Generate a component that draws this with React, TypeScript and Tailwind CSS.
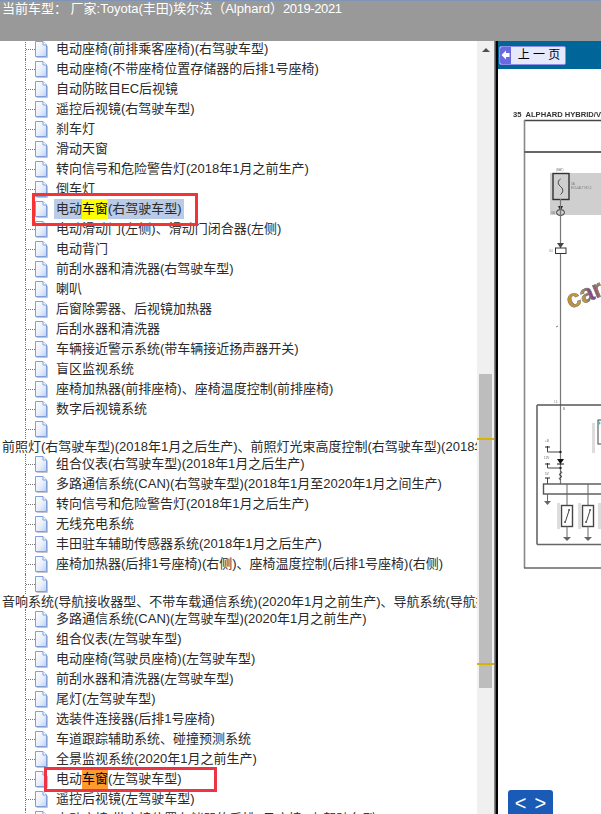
import React from "react";

const font = { fontFamily: '"Liberation Sans", "Noto Sans CJK SC", sans-serif' };

function DocIcon() {
  return (
    <svg width="13" height="17" viewBox="0 0 13 17" className="shrink-0">
      <defs>
        <linearGradient id="docg" x1="0" y1="0" x2="1" y2="1">
          <stop offset="0" stopColor="#ffffff" />
          <stop offset="0.55" stopColor="#e8eefb" />
          <stop offset="1" stopColor="#bcd0f4" />
        </linearGradient>
      </defs>
      <path d="M1.5 16.5H12.5V5L8.5 1.5" fill="none" stroke="#c4c4cc" strokeWidth="1" />
      <path d="M0.5 0.5H8L11.5 4V15.5H0.5Z" fill="url(#docg)" stroke="#7f9fd8" strokeWidth="1" />
      <path d="M8 0.5V4H11.5" fill="#ffffff" stroke="#7f9fd8" strokeWidth="1" />
    </svg>
  );
}

function Leaf({ children }: { children?: React.ReactNode }) {
  return (
    <div className="ml-[25px] flex h-5 items-center border-l border-dotted border-[#777]">
      <div className="w-[9px] shrink-0 border-t border-dotted border-[#777]" />
      <DocIcon />
      <div className="ml-[6px] whitespace-nowrap">{children}</div>
    </div>
  );
}

function Header({ children }: { children: React.ReactNode }) {
  return <div className="flex h-[15px] items-center whitespace-nowrap pl-[2px]">{children}</div>;
}

const T = ({ t }: { t: string }) => <span className="px-[2px]">{t}</span>;

function Tree() {
  const a = [
    "电动座椅(前排乘客座椅)(右驾驶车型)",
    "电动座椅(不带座椅位置存储器的后排1号座椅)",
    "自动防眩目EC后视镜",
    "遥控后视镜(右驾驶车型)",
    "刹车灯",
    "滑动天窗",
    "转向信号和危险警告灯(2018年1月之前生产)",
    "倒车灯",
  ];
  const b = [
    "电动滑动门(左侧)、滑动门闭合器(左侧)",
    "电动背门",
    "前刮水器和清洗器(右驾驶车型)",
    "喇叭",
    "后窗除雾器、后视镜加热器",
    "后刮水器和清洗器",
    "车辆接近警示系统(带车辆接近扬声器开关)",
    "盲区监视系统",
    "座椅加热器(前排座椅)、座椅温度控制(前排座椅)",
    "数字后视镜系统",
    "",
  ];
  const c = [
    "组合仪表(右驾驶车型)(2018年1月之后生产)",
    "多路通信系统(CAN)(右驾驶车型)(2018年1月至2020年1月之间生产)",
    "转向信号和危险警告灯(2018年1月之后生产)",
    "无线充电系统",
    "丰田驻车辅助传感器系统(2018年1月之后生产)",
    "座椅加热器(后排1号座椅)(右侧)、座椅温度控制(后排1号座椅)(右侧)",
    "",
  ];
  const d = [
    "多路通信系统(CAN)(左驾驶车型)(2020年1月之前生产)",
    "组合仪表(左驾驶车型)",
    "电动座椅(驾驶员座椅)(左驾驶车型)",
    "前刮水器和清洗器(左驾驶车型)",
    "尾灯(左驾驶车型)",
    "选装件连接器(后排1号座椅)",
    "车道跟踪辅助系统、碰撞预测系统",
    "全景监视系统(2020年1月之前生产)",
  ];
  const leaf = (t: string, i: number) => <Leaf key={i}>{t ? <T t={t} /> : null}</Leaf>;
  return (
    <div className="relative -mt-[2px] text-[13px] leading-5 text-[#2a2a2a]">
      {a.map(leaf)}
      <div className="relative">
        <Leaf>
          <div className="flex h-5 bg-[#b9cbe6] px-[2px]">
            电动<span className="bg-[#ffff00] text-black">车窗</span>(右驾驶车型)
          </div>
        </Leaf>
        <div className="absolute left-[32px] top-[-6px] h-[33px] w-[166px] border-[3px] border-[#f53333]" />
      </div>
      {b.map(leaf)}
      <Header>前照灯(右驾驶车型)(2018年1月之后生产)、前照灯光束高度控制(右驾驶车型)(2018年1月之后生产)</Header>
      {c.map(leaf)}
      <Header>音响系统(导航接收器型、不带车载通信系统)(2020年1月之前生产)、导航系统(导航接收器型)</Header>
      {d.map(leaf)}
      <div className="relative">
        <Leaf>
          <div className="flex h-5 px-[2px]">
            电动<span className="bg-[#ff9a2e] text-black">车窗</span>(左驾驶车型)
          </div>
        </Leaf>
        <div className="absolute left-[44px] top-[-2px] h-[25px] w-[173px] border-[3px] border-[#ee3344]" />
      </div>
      {leaf("遥控后视镜(左驾驶车型)", 0)}
      {leaf("电动座椅(带座椅位置存储器的后排1号座椅)(左驾驶车型)", 1)}
    </div>
  );
}

function Scrollbar() {
  return (
    <div className="relative h-full w-[17px] shrink-0 bg-[#f0f0f0]">
      <div className="flex h-[17px] items-center justify-center">
        <div className="mt-[1px] h-0 w-0 border-x-[4px] border-b-[4px] border-x-transparent border-b-[#505050]" />
      </div>
      <div className="mx-[2px] mt-[316px] h-[314px] bg-[#bdbdbd]" />
      <div className="absolute left-0 right-0 top-[397px] h-[2px] bg-[#d9b300]" />
      <div className="absolute left-0 right-0 top-[622px] h-[2px] bg-[#d9b300]" />
    </div>
  );
}

function Diagram() {
  const Sw = ({ x }: { x: number }) => (
    <g>
      <line x1={x} y1="484" x2={x} y2="505" stroke="#666" />
      <rect x={x - 5.5} y="505.5" width="11" height="21" fill="#fff" stroke="#444" strokeWidth="1.4" />
      <line x1={x - 2} y1="523" x2={x + 2.5} y2="509" stroke="#444" />
      <circle cx={x - 2} cy="522" r="1" fill="#666" />
      <circle cx={x + 2} cy="510" r="1" fill="#666" />
      <line x1={x} y1="526" x2={x} y2="537" stroke="#666" />
      <path d={`M${x - 4} 537H${x + 4}L${x} 541Z`} fill="#666" />
      <rect x={x - 10} y="503" width="3" height="26" fill="#ddd" />
    </g>
  );
  return (
    <svg width="103" height="745" viewBox="498 69 103 745" className="block">
      <defs>
        <linearGradient id="carg" x1="0" y1="0" x2="1" y2="0">
          <stop offset="0" stopColor="#c98a2a" />
          <stop offset="0.4" stopColor="#c9a52e" />
          <stop offset="0.7" stopColor="#7a3f9a" />
          <stop offset="1" stopColor="#d08a28" />
        </linearGradient>
        <filter id="soft" x="-5%" y="-5%" width="110%" height="110%">
          <feGaussianBlur stdDeviation="0.3" />
        </filter>
      </defs>
      <g filter="url(#soft)">
        <text x="513" y="117" fontFamily="Liberation Sans" fontWeight="700" fontSize="7.6" fill="#333">35</text>
        <text x="525.500" y="117" fontFamily="Liberation Sans" fontWeight="700" fontSize="7.6" fill="#333">ALPHARD HYBRID/V</text>
        <line x1="524" y1="120.500" x2="601" y2="120.500" stroke="#444" strokeWidth="1.4" />
        <line x1="524.500" y1="120" x2="524.500" y2="568" stroke="#888" strokeWidth="1.6" />
        <line x1="524" y1="152" x2="601" y2="152" stroke="#666" strokeWidth="2" />
        <line x1="524" y1="568" x2="601" y2="568" stroke="#666" strokeWidth="1.6" />
        <rect x="550" y="173" width="51" height="42" fill="#cfcfcf" />
        <text x="556" y="171" fontSize="3" fill="#777" fontFamily="Liberation Sans">(BAT)</text>
        <rect x="553" y="173.500" width="16" height="26" fill="none" stroke="#333" strokeWidth="1.4" />
        <path d="M560.500 179c-3 2 -3 5 0 7.500s3 5.500 0 8" fill="none" stroke="#333" strokeWidth="1" />
        <text x="571" y="185" fontSize="3" fill="#777" fontFamily="Liberation Sans">5A</text>
        <text x="571" y="189" fontSize="3" fill="#777" fontFamily="Liberation Sans">ECU-ALT NO.2</text>
        <path d="M558 206H563L561.500 209H559.500Z" fill="#222" />
        <ellipse cx="560.500" cy="212.500" rx="4" ry="3" fill="#ccc" stroke="#333" />
        <text x="551" y="214" fontSize="3" fill="#777" fontFamily="Liberation Sans">SB</text>
        <line x1="560.500" y1="199" x2="560.500" y2="484" stroke="#777" strokeWidth="1.2" />
        <path d="M557 243L564 243L560.500 248Z" fill="#444" />
        <rect x="555.500" y="248" width="10.500" height="5.500" fill="#fff" stroke="#333" />
        <text x="549" y="252" fontSize="3" fill="#888" fontFamily="Liberation Sans">S4</text>
        <line x1="556" y1="327" x2="558" y2="326" stroke="#777" />
        <text
          x="570"
          y="309"
          fontFamily="Liberation Sans"
          fontWeight="700"
          fontSize="25"
          fill="url(#carg)"
          stroke="#777"
          strokeWidth="0.6"
          transform="rotate(-22 570 309)"
        >
          car
        </text>
        <line x1="537" y1="405" x2="601" y2="405" stroke="#555" strokeWidth="1.6" />
        <line x1="537" y1="405" x2="537" y2="544.500" stroke="#666" strokeWidth="1.6" />
        <line x1="537" y1="544.500" x2="601" y2="544.500" stroke="#666" strokeWidth="1.4" />
        <text x="554" y="403" fontSize="3" fill="#888" fontFamily="Liberation Sans">16</text>
        <text x="563" y="410" fontSize="3" fill="#666" fontFamily="Liberation Sans">B</text>
        <text x="545" y="442" fontSize="3" fill="#666" fontFamily="Liberation Sans">+B</text>
        <path d="M547.500 446V452H560.500" fill="none" stroke="#444" />
        <line x1="545" y1="447" x2="550" y2="447" stroke="#222" />
        <path d="M557 459H564L560.500 464Z" fill="#111" />
        <line x1="557" y1="464" x2="564" y2="464" stroke="#111" />
        <circle cx="560.500" cy="452" r="1.200" fill="#222" />
        <circle cx="560.500" cy="468" r="1.200" fill="#222" />
        <text x="544" y="459" fontSize="3" fill="#666" fontFamily="Liberation Sans">12V</text>
        <path d="M547.500 463V468H560.500" fill="none" stroke="#444" />
        <line x1="545" y1="464" x2="550" y2="464" stroke="#222" />
        <text x="545" y="475" fontSize="3" fill="#666" fontFamily="Liberation Sans">5V</text>
        <line x1="547.500" y1="478" x2="547.500" y2="484" stroke="#444" />
        <line x1="545" y1="478" x2="550" y2="478" stroke="#222" />
        <path d="M560.500 471l1.500 1.500l-3 2l3 2l-3 2l1.500 1.500" fill="none" stroke="#444" />
        <rect x="543.500" y="484" width="60" height="10" fill="#fff" stroke="#555" strokeWidth="1.4" />
        <line x1="547.500" y1="494" x2="547.500" y2="501" stroke="#666" />
        <path d="M544 501H551L547.500 505Z" fill="#666" />
        <Sw x={567} />
        <Sw x={588} />
        <rect x="598" y="503" width="3" height="26" fill="#ddd" />
        <rect x="592" y="423" width="3" height="30" fill="#ddd" />
        <rect x="598" y="420" width="4" height="24" fill="#fff" stroke="#444" />
        <circle cx="599" cy="423" r="1.500" fill="#55b5c5" />
      </g>
    </svg>
  );
}

export default function App() {
  return (
    <div className="relative h-[814px] w-[601px] overflow-hidden bg-white" style={font}>
      <div className="h-[41px] border-t border-[#7f95b8] bg-[#999999] pl-[2px] text-[13px] leading-[16px] text-white whitespace-nowrap">
        当前车型： 厂家:Toyota(丰田)埃尔法（Alphard）<span className="tracking-[-0.4px]">2019-2021</span>
      </div>
      <div className="flex h-[773px]">
        <div className="h-full w-[477px] shrink-0 overflow-hidden">
          <Tree />
        </div>
        <Scrollbar />
        <div className="h-full w-[1px] shrink-0 bg-[#888]" />
        <div className="h-full w-[1px] shrink-0 bg-[#555]" />
        <div className="h-full w-[2px] shrink-0 bg-black" />
        <div className="relative h-full min-w-0 flex-1">
          <div className="flex h-[28px] items-center bg-[#006699] pl-[1px]">
            <div className="flex h-[19px] w-[67px] items-center rounded-[2px] border border-[#8e8ee6] bg-[#e6e8fb]">
              <div className="flex h-full w-[11px] items-center justify-center rounded-l-[2px] bg-[#6a6ae0]">
                <svg width="9" height="10" viewBox="0 0 9 10">
                  <path d="M0.500 5L5 0.500V3H8.500V7H5V9.500Z" fill="#fff" />
                </svg>
              </div>
              <div className="flex-1 pl-[2px] text-center text-[12px] leading-none text-black">上 一 页</div>
            </div>
          </div>
          <Diagram />
          <div className="absolute bottom-0 left-[10px] flex h-[24px] w-[45px] items-center justify-center gap-[8px] rounded-t-[3px] bg-[#1a5bb8] pt-[2px] text-[20px] leading-none text-white">
            <span>&lt;</span>
            <span>&gt;</span>
          </div>
        </div>
      </div>
    </div>
  );
}
